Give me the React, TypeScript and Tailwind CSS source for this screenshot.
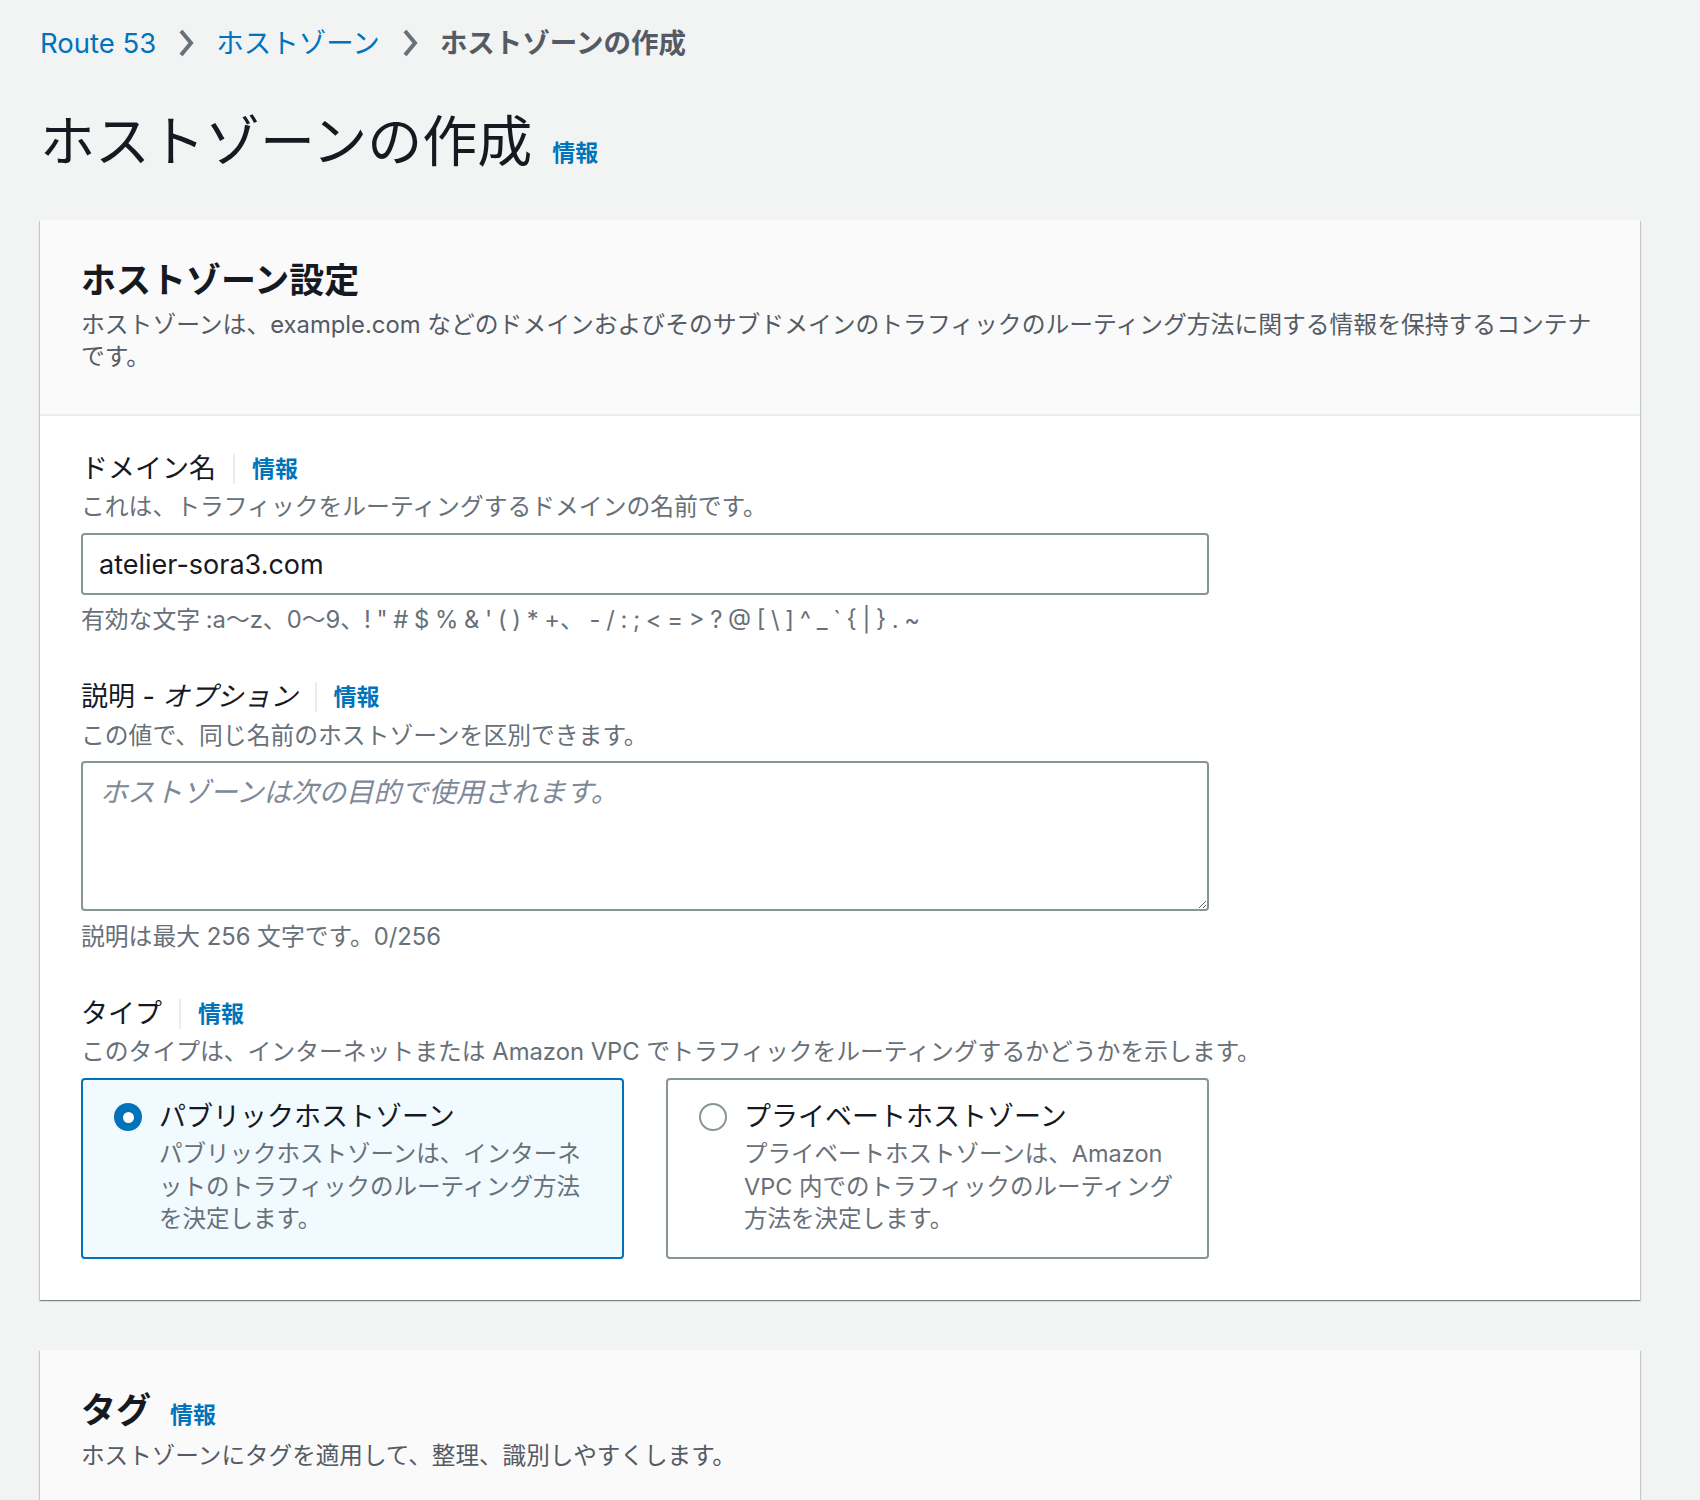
import React from 'react';

const FONT = "font-['Inter','Noto_Sans_CJK_JP',sans-serif]";

function Chevron() {
    return (
        <svg width="20" height="30" viewBox="0 0 20 30" className="mx-[20px] shrink-0">
            <polyline points="5,3 15,15 5,27" fill="none" stroke="#687078" strokeWidth="4" strokeLinejoin="miter" />
        </svg>
    );
}

function Info({ className = '' }: { className?: string }) {
    return <span className={`text-[23px] font-bold text-[#0073bb] ${className}`}>情報</span>;
}

function FieldLabel({ children }: { children: React.ReactNode }) {
    return (
        <div className="flex items-center h-[36px] text-[27px] leading-[36px] text-[#16191f]">
            <span>{children}</span>
            <span className="mx-[17px] w-[2px] h-[30px] bg-[#eaeded]" />
            <Info />
        </div>
    );
}

function Desc({ children, className = '' }: { children: React.ReactNode; className?: string }) {
    return <div className={`text-[23.8px] leading-[32px] text-[#687078] ${className}`}>{children}</div>;
}

function Radio({ checked }: { checked: boolean }) {
    return checked ? (
        <span className="shrink-0 w-[28px] h-[28px] rounded-full bg-[#0073bb] flex items-center justify-center">
            <span className="w-[11px] h-[11px] rounded-full bg-white" />
        </span>
    ) : (
        <span className="shrink-0 w-[28px] h-[28px] rounded-full border-[2px] border-[#879596] bg-white" />
    );
}

function Tile({ checked, title, lines }: { checked: boolean; title: string; lines: string[] }) {
    return (
        <div
            className={`w-[543px] h-[181px] rounded-[4px] border-[2px] pl-[31px] pr-[20px] pt-[19px] ${
                checked ? 'border-[#0073bb] bg-[#f1faff]' : 'border-[#879596] bg-white'
            }`}
        >
            <div className="flex items-center gap-[17px] h-[36px]">
                <Radio checked={checked} />
                <span className="text-[27px] leading-[36px] text-[#16191f]">{title}</span>
            </div>
            <div className="pl-[45px] mt-[3px] text-[23.5px] leading-[32.5px] text-[#687078]">
                {lines.map((l) => (
                    <div key={l} className="whitespace-nowrap">{l}</div>
                ))}
            </div>
        </div>
    );
}

const ALLOWED = '有効な文字 :a〜z、0〜9、! " # $ % & \' ( ) * +、 - / : ; < = > ? @ [ \\ ] ^ _ ` { | } . ~';

const PANEL =
    'w-[1600px] bg-white shadow-[0_1px_1px_0_rgba(0,28,36,0.3),1px_1px_1px_0_rgba(0,28,36,0.15),-1px_1px_1px_0_rgba(0,28,36,0.15)]';

export default function App() {
    return (
        <div className={`${FONT} min-h-[1500px] bg-[#f2f3f3] pl-[40px] pr-[60px] pt-[25px] overflow-hidden`}>
            {/* Breadcrumb */}
            <nav className="flex items-center h-[36px] text-[27.5px] leading-[36px]">
                <span className="text-[#0073bb]">Route 53</span>
                <Chevron />
                <span className="text-[#0073bb]">ホストゾーン</span>
                <Chevron />
                <span className="font-bold text-[#545b64]">ホストゾーンの作成</span>
            </nav>

            {/* Title */}
            <div className="flex items-baseline mt-[48px]">
                <h1 className="text-[55px] leading-[64px] text-[#16191f]">ホストゾーンの作成</h1>
                <Info className="ml-[20px]" />
            </div>

            {/* Hosted zone settings */}
            <section className={`mt-[47px] ${PANEL}`}>
                <div className="bg-[#fafafa] border-b-[2px] border-[#eaeded] px-[41px] pt-[38px] pb-[41px]">
                    <h2 className="text-[35px] leading-[44px] font-bold text-[#16191f]">ホストゾーン設定</h2>
                    <div className="mt-[7px] text-[23.8px] leading-[32px] text-[#545b64]">
                        <div className="whitespace-nowrap">
                            ホストゾーンは、example.com などのドメインおよびそのサブドメインのトラフィックのルーティング方法に関する情報を保持するコンテナ
                        </div>
                        <div>です。</div>
                    </div>
                </div>

                <div className="px-[41px] pt-[35px] pb-[41px]">
                    {/* Domain name */}
                    <FieldLabel>ドメイン名</FieldLabel>
                    <Desc className="mt-[4px]">これは、トラフィックをルーティングするドメインの名前です。</Desc>
                    <input
                        readOnly
                        value="atelier-sora3.com"
                        className="mt-[10px] block w-[1128px] h-[62px] rounded-[4px] border-[2px] border-[#879596] bg-white px-[16px] text-[27px] text-[#16191f] outline-none"
                    />
                    <Desc className="mt-[9px] whitespace-pre [word-spacing:-1px]">{ALLOWED}</Desc>

                    {/* Description */}
                    <div className="mt-[43px]">
                        <FieldLabel>
                            説明 - <i>オプション</i>
                        </FieldLabel>
                    </div>
                    <Desc className="mt-[5px]">この値で、同じ名前のホストゾーンを区別できます。</Desc>
                    <textarea
                        readOnly
                        placeholder="ホストゾーンは次の目的で使用されます。"
                        className="mt-[9px] block w-[1128px] h-[150px] rounded-[4px] border-[2px] border-[#879596] bg-white px-[17px] pt-[11px] text-[27.5px] leading-[36px] text-[#16191f] placeholder:italic placeholder:text-[#7d8998] outline-none"
                    />
                    <Desc className="mt-[10px]">説明は最大 256 文字です。0/256</Desc>

                    {/* Type */}
                    <div className="mt-[43px]">
                        <FieldLabel>タイプ</FieldLabel>
                    </div>
                    <Desc className="mt-[4px]">
                        このタイプは、インターネットまたは Amazon VPC でトラフィックをルーティングするかどうかを示します。
                    </Desc>
                    <div className="mt-[10px] flex gap-[42px]">
                        <Tile
                            checked
                            title="パブリックホストゾーン"
                            lines={[
                                'パブリックホストゾーンは、インターネ',
                                'ットのトラフィックのルーティング方法',
                                'を決定します。',
                            ]}
                        />
                        <Tile
                            checked={false}
                            title="プライベートホストゾーン"
                            lines={[
                                'プライベートホストゾーンは、Amazon',
                                'VPC 内でのトラフィックのルーティング',
                                '方法を決定します。',
                            ]}
                        />
                    </div>
                </div>
            </section>

            {/* Tags */}
            <section className={`mt-[50px] ${PANEL}`}>
                <div className="bg-[#fafafa] border-b-[2px] border-[#eaeded] px-[41px] pt-[38px] pb-[41px]">
                    <div className="flex items-baseline">
                        <h2 className="text-[35px] leading-[44px] font-bold text-[#16191f]">タグ</h2>
                        <Info className="ml-[19px]" />
                    </div>
                    <div className="mt-[7px] text-[23.6px] leading-[32px] text-[#545b64]">
                        ホストゾーンにタグを適用して、整理、識別しやすくします。
                    </div>
                </div>
                <div className="h-[200px]" />
            </section>
        </div>
    );
}
